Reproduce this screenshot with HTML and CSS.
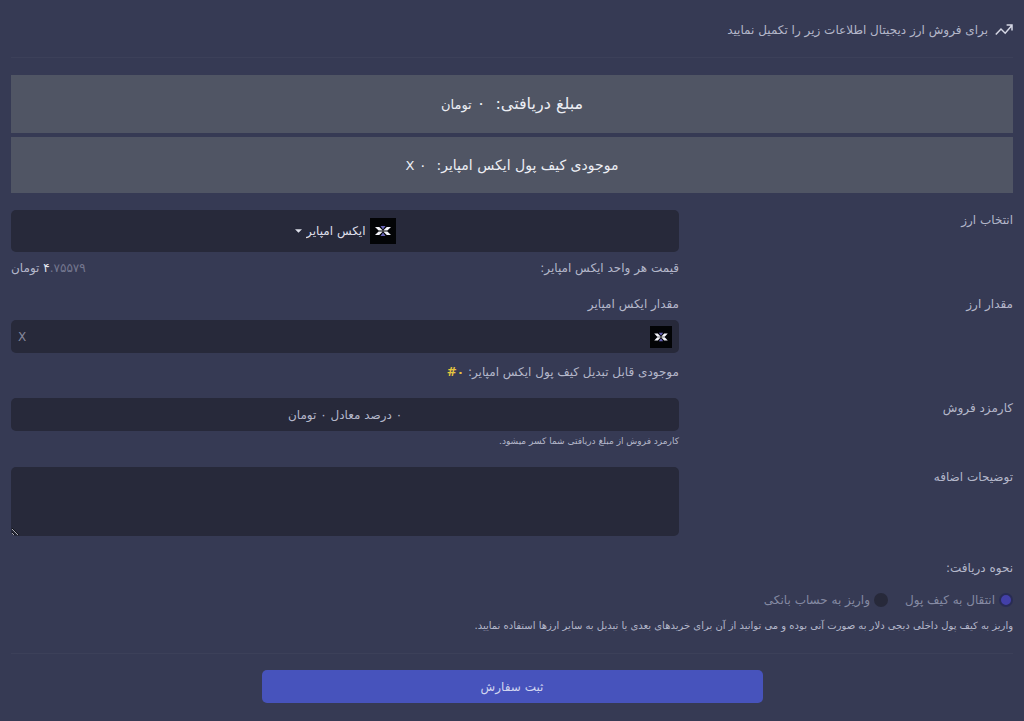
FILE: index.html
```html
<!DOCTYPE html>
<html lang="fa" dir="rtl">
<head>
<meta charset="utf-8">
<meta name="viewport" content="width=device-width, initial-scale=1">
<title>فروش ارز دیجیتال</title>
<link rel="stylesheet" href="styles.css">
</head>
<body>
<svg class="defs" aria-hidden="true">
  <symbol id="coin" viewBox="0 0 26 26">
    <rect width="26" height="26" fill="#030406"/>
    <path d="M10.5 8h5L13 11.4zM10.5 18h5L13 14.6z" fill="#6763b5"/>
    <path d="M5 9h4.2l3.6 3.6H8.6zM21 9h-4.2l-3.6 3.6h4.2zM5 17h4.2l3.6-3.6H8.6zM21 17h-4.2l-3.6-3.6h4.2z" fill="#f4f4fa"/>
  </symbol>
</svg>
<main class="page">
  <header class="head">
    <svg class="trend" viewBox="0 0 18 12" aria-hidden="true"><path d="M.8 10.6L6 5l4.2 4.2L17 1.2M11.6 1H17v5.4" fill="none" stroke="currentColor" stroke-width="1.5"/></svg>
    <h1 class="title">برای فروش ارز دیجیتال اطلاعات زیر را تکمیل نمایید</h1>
  </header>
  <form class="form">
    <div class="banner banner-total">مبلغ دریافتی:<span class="amount">۰ <span class="unit">تومان</span></span></div>
    <div class="banner">موجودی کیف پول ایکس امپایر:<span class="amount">۰ <span class="unit">X</span></span></div>

    <div class="row">
      <label class="name" for="coin-select">انتخاب ارز</label>
      <div class="content">
        <div class="field picker">
          <svg class="coin-large" aria-hidden="true"><use href="#coin"/></svg>
          <select class="select" id="coin-select"><option>ایکس امپایر</option></select>
          <svg class="caret" viewBox="0 0 8 4" aria-hidden="true"><path d="M0 0h8L4 4z" fill="currentColor"/></svg>
        </div>
        <div class="price"><span>قیمت هر واحد ایکس امپایر:</span><span><span class="whole">۴</span><span class="fraction">.۷۵۵۷۹</span> تومان</span></div>
      </div>
    </div>

    <div class="row row-amount">
      <span class="name">مقدار ارز</span>
      <div class="content">
        <label class="sublabel" for="amount">مقدار ایکس امپایر</label>
        <div class="field group">
          <svg class="coin-small" aria-hidden="true"><use href="#coin"/></svg>
          <input class="input" id="amount" type="text" inputmode="decimal">
          <span class="suffix">X</span>
        </div>
        <p class="available">موجودی قابل تبدیل کیف پول ایکس امپایر: <span class="highlight" dir="ltr">#۰</span></p>
      </div>
    </div>

    <div class="row row-fee">
      <label class="name" for="fee">کارمزد فروش</label>
      <div class="content">
        <input class="field fee" id="fee" type="text" value="۰ درصد معادل ۰ تومان" readonly>
        <p class="hint">کارمزد فروش از مبلغ دریافتی شما کسر میشود.</p>
      </div>
    </div>

    <div class="row row-notes">
      <label class="name" for="notes">توضیحات اضافه</label>
      <div class="content"><textarea class="field notes" id="notes"></textarea></div>
    </div>

    <fieldset class="receive">
      <legend class="legend">نحوه دریافت:</legend>
      <div class="options">
        <label class="option"><input class="radio" type="radio" name="receive" checked>انتقال به کیف پول</label>
        <label class="option"><input class="radio" type="radio" name="receive">واریز به حساب بانکی</label>
      </div>
      <p class="details">واریز به کیف پول داخلی دیجی دلار به صورت آنی بوده و می توانید از آن برای خریدهای بعدی یا تبدیل به سایر ارزها استفاده نمایید.</p>
    </fieldset>

    <div class="actions"><button class="submit" type="submit">ثبت سفارش</button></div>
  </form>
</main>
</body>
</html>
```
FILE: styles.css
```css
* { box-sizing: border-box; }
body {
  margin: 0;
  min-height: 100vh;
  background: #363a54;
  color: #b4b7ca;
  font-family: "DejaVu Sans", sans-serif;
  font-size: 12px;
  line-height: 20px;
}
p, h1 { margin: 0; font-weight: 400; }
input, select, textarea, button { font: inherit; color: inherit; }
.defs { position: absolute; width: 0; height: 0; }
.page { padding: 0 11px; }
.head {
  display: flex;
  align-items: center;
  gap: 7px;
  height: 58px;
  padding-top: 3px;
  border-bottom: 1px solid #3c4059;
}
.trend { width: 18px; height: 12px; color: #d5d7e4; }
.title { font-size: 12px; }
.form { padding-top: 17px; }
.banner {
  display: flex;
  align-items: center;
  justify-content: center;
  gap: 10px;
  min-height: 56px;
  background: #505564;
  color: #eceef4;
  font-size: 14px;
}
.banner-total { min-height: 58px; margin-bottom: 4px; font-size: 16px; }
.unit { font-size: 13px; }
.row {
  display: grid;
  grid-template-columns: 1fr 2fr;
  margin-top: 17px;
}
.row-amount, .row-fee { margin-top: 16px; }
.row-notes { margin-top: 16px; }
.name { justify-self: start; }
.field {
  width: 100%;
  border: 0;
  border-radius: 5px;
  background: #27293a;
  outline: 0;
}
.picker {
  display: flex;
  align-items: center;
  justify-content: center;
  gap: 4px;
  height: 42px;
  color: #dddfe9;
}
.coin-large { width: 26px; height: 26px; }
.coin-small { width: 22px; height: 22px; flex: none; }
.select {
  appearance: none;
  padding: 0;
  border: 0;
  background: transparent;
}
.caret { width: 7px; height: 4px; }
.price {
  display: flex;
  justify-content: space-between;
  margin-top: 6px;
}
.whole { color: #e4e6ef; }
.fraction { color: #74778f; }
.sublabel { display: block; margin-bottom: 6px; }
.group {
  display: flex;
  align-items: center;
  gap: 8px;
  height: 33px;
  padding: 0 7px;
}
.input {
  flex: 1;
  min-width: 0;
  border: 0;
  background: transparent;
  outline: 0;
}
.suffix { color: #85879a; }
.available { margin-top: 9px; }
.highlight { color: #e5c53f; font-weight: 700; }
.fee { height: 33px; text-align: center; }
.hint { font-size: 9px; }
.details { font-size: 10px; }
.notes { display: block; height: 69px; resize: both; }
.receive { margin: 22px 0 0; padding: 0 0 17px; border: 0; border-bottom: 1px solid #3c4059; }
.legend { padding: 0; }
.options { display: flex; gap: 17px; margin: 12px 0 6px; color: #858aa3; }
.option { display: flex; align-items: center; gap: 4px; }
.radio {
  appearance: none;
  width: 14px;
  height: 14px;
  margin: 0;
  border-radius: 50%;
  background: #27293a;
}
.radio:checked { border: 2px solid #292c55; background: #4340a8; }
.actions { display: flex; justify-content: center; margin-top: 16px; }
.submit {
  width: 50%;
  height: 33px;
  border: 0;
  border-radius: 5px;
  background: #4753bc;
  color: #d0d5f0;
}
```
